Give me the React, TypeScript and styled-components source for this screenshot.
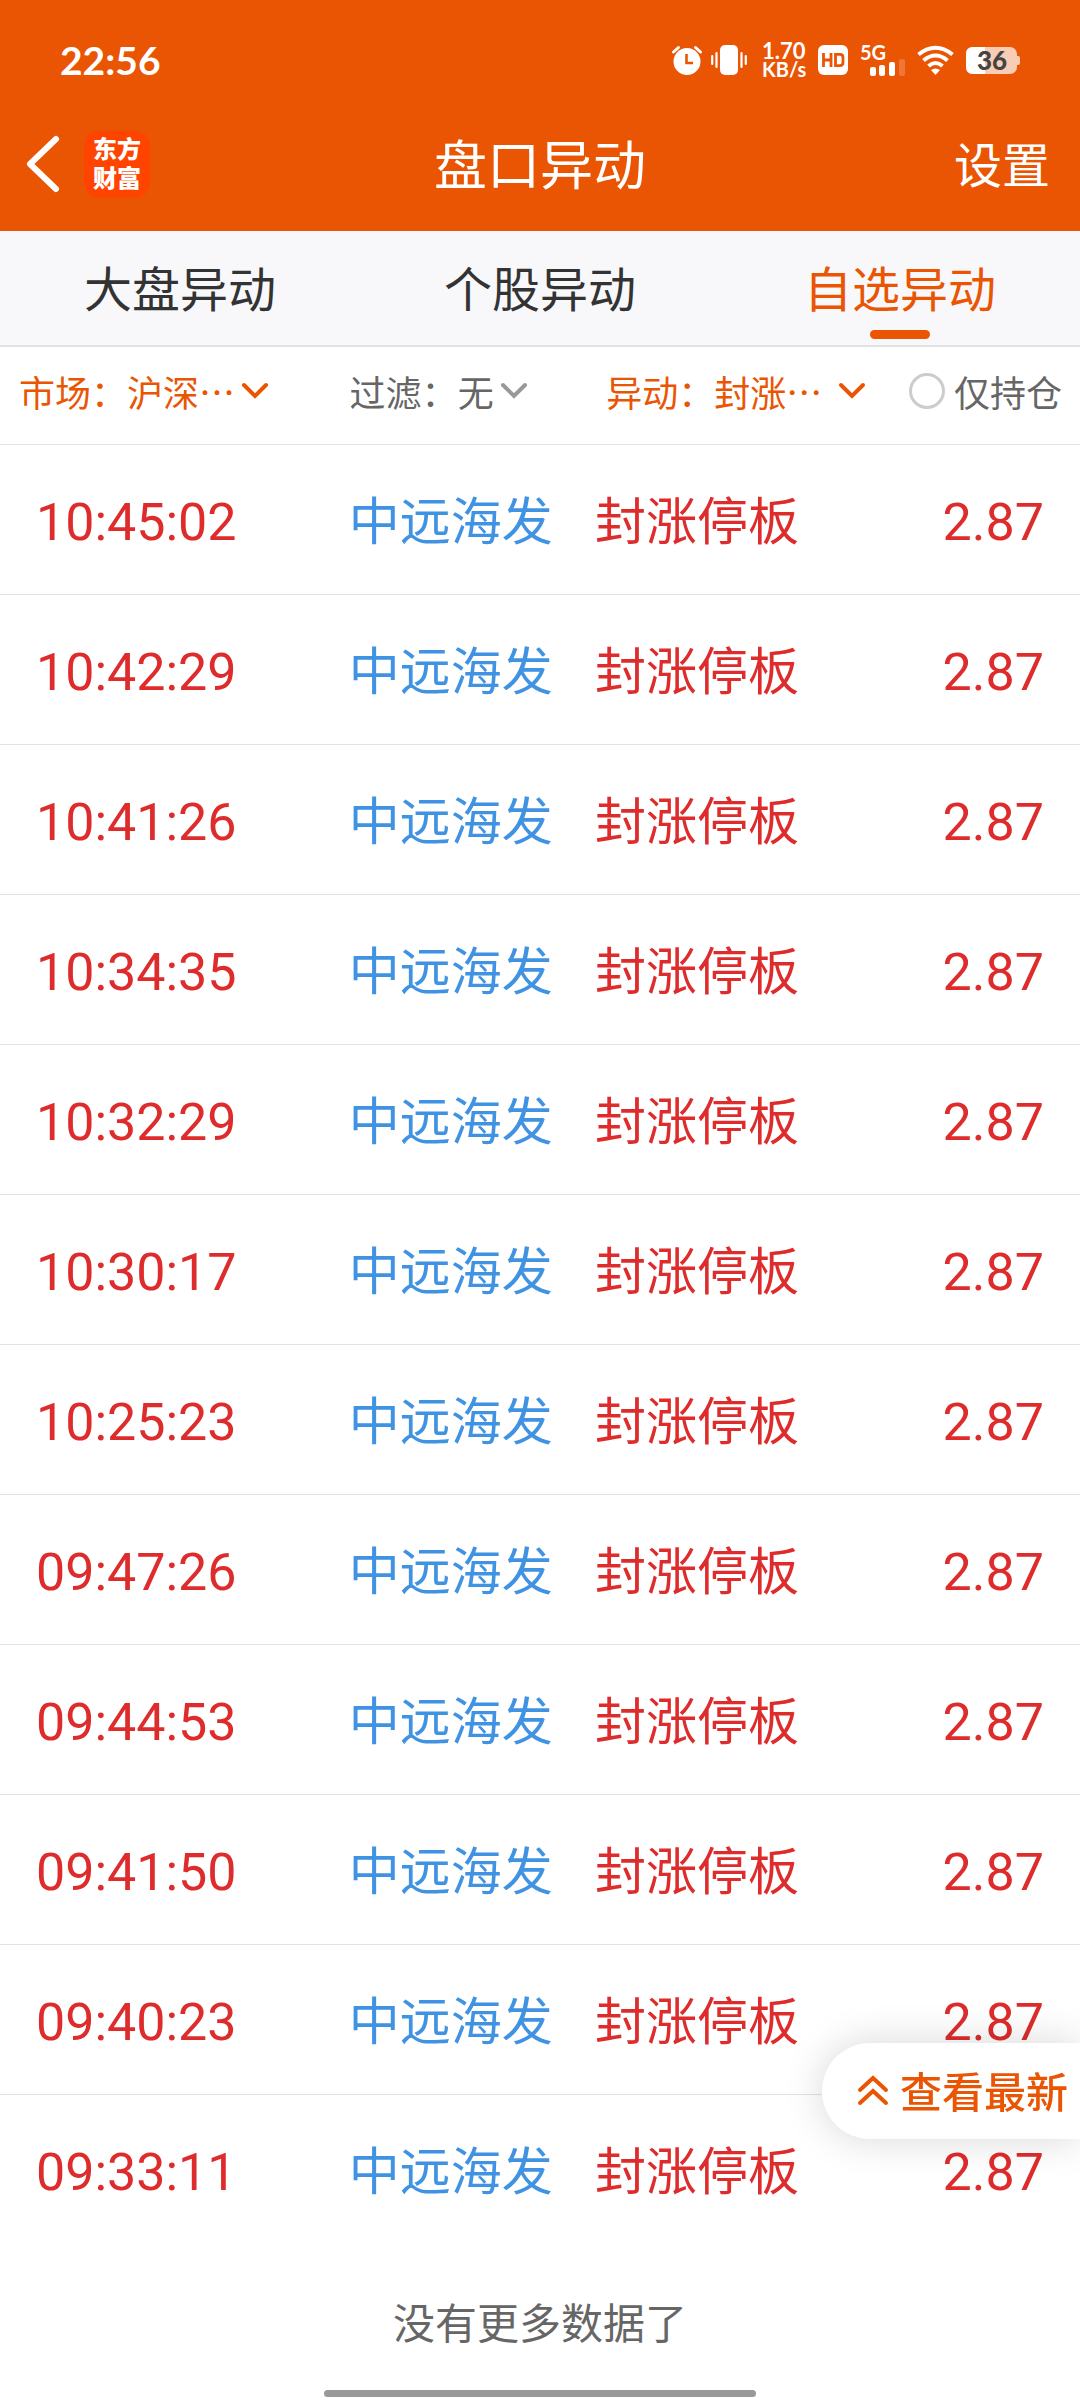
import React from "react";
import styled, { createGlobalStyle } from "styled-components";

const ORANGE = "#ea5504";
const CJK = '"Noto Sans CJK SC", sans-serif';
const DIGITS = 'Roboto, "Noto Sans CJK SC", sans-serif';

const GlobalStyle = createGlobalStyle`
  * { box-sizing: border-box; }
  body { margin: 0; background: #fff; font-family: ${CJK}; }
  button, select, input { font: inherit; color: inherit; background: none; border: 0; padding: 0; margin: 0; }
  button { cursor: pointer; }
  svg { overflow: visible; }
`;

const Page = styled.div`
  display: flex;
  flex-direction: column;
  min-height: 100vh;
`;

const Header = styled.header`
  background: ${ORANGE};
  color: #fff;
`;

const StatusBar = styled.div`
  display: flex;
  align-items: center;
  justify-content: space-between;
  height: 96px;
  padding: 24px 60px 0;
  font-family: Lato, sans-serif;
  font-weight: 700;
`;

const Clock = styled.time`
  font-size: 39px;
  line-height: 48px;
`;

const StatusIcons = styled.div`
  display: flex;
  align-items: center;
  gap: 12px;
`;

const AlertIcons = styled.div`
  display: flex;
  gap: 9px;
  padding-right: 3px;
`;

const NetSpeed = styled.div`
  display: flex;
  flex-direction: column;
  width: 44px;
  font-size: 22px;
  line-height: 19px;
`;

const SpeedUnit = styled.span`
  font-size: 20px;
`;

const TitleBar = styled.div`
  display: grid;
  grid-template-columns: 1fr auto 1fr;
  align-items: center;
  height: 135px;
  padding: 0 30px;
`;

const Brand = styled.div`
  display: flex;
  align-items: center;
  gap: 24px;
`;

const BackButton = styled.button`
  display: flex;
`;

const Logo = styled.div`
  display: flex;
  flex-direction: column;
  align-items: center;
  justify-content: center;
  width: 66px;
  height: 66px;
  padding-bottom: 4px;
  border-radius: 14px;
  background: #ff4400;
  font-size: 24px;
  font-weight: 900;
  line-height: 29px;
`;

const Title = styled.h1`
  margin: 0;
  padding-bottom: 3px;
  font-size: 53px;
  font-weight: 400;
  line-height: 72px;
`;

const SettingsButton = styled.button`
  justify-self: end;
  padding-bottom: 3px;
  font-size: 48px;
  line-height: 72px;
`;

const Tabs = styled.nav`
  display: grid;
  grid-template-columns: repeat(3, 1fr);
  height: 116px;
  background: #f8f8fb;
  border-bottom: 2px solid #e2e2e2;
`;

const Tab = styled.button<{ $active?: boolean }>`
  position: relative;
  padding-bottom: 4px;
  font-size: 48px;
  line-height: 72px;
  color: ${(p) => (p.$active ? ORANGE : "#333")};

  &::after {
    content: "";
    display: ${(p) => (p.$active ? "block" : "none")};
    position: absolute;
    bottom: 6px;
    left: calc(50% - 30px);
    width: 60px;
    height: 9px;
    border-radius: 5px;
    background: ${ORANGE};
  }
`;

const Filters = styled.form`
  display: grid;
  grid-template-columns: 331fr 257fr 303fr 153fr;
  align-items: center;
  height: 98px;
  padding: 0 18px 10px 19px;
  border-bottom: 1px solid #e2e2e2;
  font-size: 36px;
  line-height: 48px;
  color: #666;
`;

const Filter = styled.label<{ $active?: boolean }>`
  display: flex;
  align-items: center;
  white-space: nowrap;
  color: ${(p) => (p.$active ? ORANGE : "#666")};
`;

const FilterSelect = styled.select<{ $room: number }>`
  appearance: none;
  height: 48px;
  padding-right: ${(p) => p.$room}px;
  outline: none;
`;

const FilterChevron = styled.svg<{ $active?: boolean }>`
  flex: none;
  margin-left: -28px;
  pointer-events: none;
  color: ${(p) => (p.$active ? ORANGE : "#999")};
`;

const HoldingsOnly = styled.label`
  display: flex;
  align-items: center;
  gap: 9px;
  white-space: nowrap;
`;

const RoundCheck = styled.input`
  appearance: none;
  flex: none;
  width: 36px;
  height: 36px;
  border: 3px solid #ccc;
  border-radius: 50%;

  &:checked { border-color: ${ORANGE}; background: ${ORANGE}; }
`;

const EventTable = styled.table`
  width: 100%;
  table-layout: fixed;
  border-spacing: 0;
  font-size: 51px;
  line-height: 72px;
  white-space: nowrap;
`;

const TimeCol = styled.col`
  width: 32.3%;
`;

const NameCol = styled.col`
  width: 22.8%;
`;

const PriceCol = styled.col`
  width: 20%;
`;

const Cell = styled.td`
  height: 150px;
  padding: 37px 0 24px;
  border-bottom: 1px solid #e2e2e2;
  vertical-align: baseline;
`;

const EventRow = styled.tr`
  color: #de2c2c;

  &:last-child > ${Cell} { border-bottom-color: transparent; }
`;

const TimeCell = styled(Cell)`
  padding-left: 36px;
  font-family: ${DIGITS};
  font-size: 52px;
`;

const NameCell = styled(Cell)`
  color: #4093e2;
`;

const PriceCell = styled(Cell)`
  padding-right: 36px;
  font-family: ${DIGITS};
  font-size: 52px;
  text-align: right;
`;

const EndNote = styled.p`
  margin: 0;
  padding-top: 46px;
  text-align: center;
  font-size: 42px;
  line-height: 60px;
  color: #666;
`;

const HomeBar = styled.div`
  align-self: center;
  width: 40%;
  height: 7px;
  margin: auto 0 3px;
  border-radius: 4px;
  background: #999;
`;

const LatestButton = styled.button`
  position: fixed;
  right: 0;
  bottom: 261px;
  display: flex;
  align-items: center;
  gap: 12px;
  height: 96px;
  padding: 0 12px 2px 36px;
  border-radius: 48px 0 0 48px;
  background: #fff;
  box-shadow: 0 0 40px rgba(0, 0, 0, 0.16);
  font-size: 42px;
  font-weight: 500;
  line-height: 60px;
  color: ${ORANGE};
`;

const times = [
  "10:45:02", "10:42:29", "10:41:26", "10:34:35", "10:32:29", "10:30:17",
  "10:25:23", "09:47:26", "09:44:53", "09:41:50", "09:40:23", "09:33:11",
];
const events = times.map((time) => ({ time, name: "中远海发", kind: "封涨停板", price: "2.87" }));

const AlarmIcon = () => (
  <svg width="30" height="30" viewBox="0 0 30 30" aria-hidden="true">
    <circle cx="15" cy="16.500" r="13.500" fill="#fff" />
    <path d="M1.500 7 6.500 2.500M28.500 7 23.500 2.500" stroke="#fff" strokeWidth="3" strokeLinecap="round" />
    <path d="M14.500 9v9h6.500" fill="none" stroke={ORANGE} strokeWidth="2.600" />
  </svg>
);

const VibrateIcon = () => (
  <svg width="36" height="30" viewBox="0 0 36 30" aria-hidden="true">
    <rect x="9" width="18" height="30" rx="5" fill="#fff" />
    <path d="M1.200 11v8M5.500 8v14M30.500 8v14M34.800 11v8" stroke="#fff" strokeWidth="2.200" strokeLinecap="round" />
  </svg>
);

const HdIcon = () => (
  <svg width="30" height="30" viewBox="0 0 30 30" aria-label="HD">
    <rect width="30" height="30" rx="6" fill="#fff" />
    <path d="M5.500 8v14M13 8v14M5.500 15H13M17.500 9.400h4.500q3 0 3 3v5.200q0 3-3 3h-4.500z" fill="none" stroke={ORANGE} strokeWidth="2.800" />
  </svg>
);

const SignalIcon = () => (
  <svg width="45" height="32" viewBox="0 0 45 32" aria-label="5G">
    <text x="0" y="16" fontFamily="Lato, sans-serif" fontWeight="700" fontSize="20" fill="#fff">5G</text>
    <rect x="10" y="23" width="6" height="9" rx="2" fill="#fff" />
    <rect x="19" y="21" width="6" height="11" rx="2" fill="#fff" />
    <rect x="29" y="18" width="6" height="14" rx="2" fill="#fff" />
    <rect x="39" y="15" width="6" height="17" rx="2" fill="#fff" opacity="0.200" />
  </svg>
);

const WifiIcon = () => (
  <svg width="37" height="30" viewBox="0 0 37 30" aria-hidden="true">
    <g fill="none" stroke="#fff" strokeWidth="4">
      <path d="M1.500 9.500Q18.500-4 35.500 9.500" />
      <path d="M6.500 15.500Q18.500 5.500 30.500 15.500" />
      <path d="M11.500 21Q18.500 15 25.500 21" />
    </g>
    <path d="M14 25Q18.500 22 23 25L18.500 30z" fill="#fff" />
  </svg>
);

const BatteryIcon = () => (
  <svg width="54" height="27" viewBox="0 0 54 27" aria-label="36%">
    <path d="M51 9h1q2 0 2 2v5q0 2-2 2h-1z" fill="#f9cdb4" />
    <rect width="51" height="27" rx="7" fill="#f9cdb4" />
    <path d="M7 0H19V27H7Q0 27 0 20V7Q0 0 7 0z" fill="#fff" />
    <text x="26" y="23" textAnchor="middle" fontFamily="Lato, sans-serif" fontWeight="900" fontSize="26" fill="#444">36</text>
  </svg>
);

const Chevron = ({ active }: { active?: boolean }) => (
  <FilterChevron $active={active} width="28" height="18" viewBox="0 0 28 18" aria-hidden="true">
    <path d="M3 3 14 14 25 3" fill="none" stroke="currentColor" strokeWidth="4" strokeLinecap="round" />
  </FilterChevron>
);

export default function App() {
  return (
    <Page lang="zh-CN">
      <GlobalStyle />
      <Header>
        <StatusBar>
          <Clock>22:56</Clock>
          <StatusIcons>
            <AlertIcons>
              <AlarmIcon />
              <VibrateIcon />
            </AlertIcons>
            <NetSpeed>
              1.70
              <SpeedUnit>KB/s</SpeedUnit>
            </NetSpeed>
            <HdIcon />
            <SignalIcon />
            <WifiIcon />
            <BatteryIcon />
          </StatusIcons>
        </StatusBar>
        <TitleBar>
          <Brand>
            <BackButton aria-label="返回">
              <svg width="30" height="58" viewBox="0 0 30 58" aria-hidden="true">
                <path d="M26 4 0 29 26 54" fill="none" stroke="#fff" strokeWidth="6" strokeLinecap="round" strokeLinejoin="round" />
              </svg>
            </BackButton>
            <Logo>
              <span>东方</span>
              <span>财富</span>
            </Logo>
          </Brand>
          <Title>盘口异动</Title>
          <SettingsButton>设置</SettingsButton>
        </TitleBar>
      </Header>

      <Tabs>
        <Tab>大盘异动</Tab>
        <Tab>个股异动</Tab>
        <Tab $active>自选异动</Tab>
      </Tabs>

      <Filters>
        <Filter $active>
          市场：
          <FilterSelect $room={33}><option>沪深…</option></FilterSelect>
          <Chevron active />
        </Filter>
        <Filter>
          过滤：
          <FilterSelect $room={33}><option>无</option></FilterSelect>
          <Chevron />
        </Filter>
        <Filter $active>
          异动：
          <FilterSelect $room={43}><option>封涨…</option></FilterSelect>
          <Chevron active />
        </Filter>
        <HoldingsOnly>
          <RoundCheck type="checkbox" />
          仅持仓
        </HoldingsOnly>
      </Filters>

      <EventTable>
        <colgroup>
          <TimeCol />
          <NameCol />
          <col />
          <PriceCol />
        </colgroup>
        <tbody>
          {events.map((e) => (
            <EventRow key={e.time}>
              <TimeCell>{e.time}</TimeCell>
              <NameCell>{e.name}</NameCell>
              <Cell>{e.kind}</Cell>
              <PriceCell>{e.price}</PriceCell>
            </EventRow>
          ))}
        </tbody>
      </EventTable>

      <EndNote>没有更多数据了</EndNote>
      <HomeBar />

      <LatestButton>
        <svg width="30" height="30" viewBox="0 0 30 30" aria-hidden="true">
          <path d="M2 15 15 3 28 15M2 28 15 16 28 28" fill="none" stroke="currentColor" strokeWidth="4" strokeLinecap="round" />
        </svg>
        查看最新
      </LatestButton>
    </Page>
  );
}
